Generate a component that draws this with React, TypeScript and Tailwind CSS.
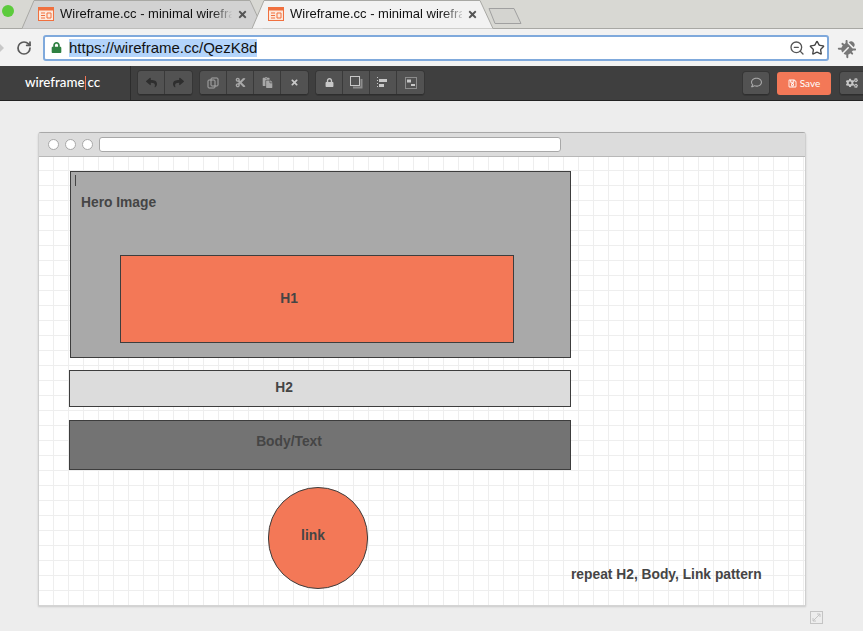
import type { ReactNode } from "react";
import { RotateCw, Star, ZoomOut } from "lucide-react";
import { FaBug, FaCogs, FaCut, FaLock, FaPaste, FaRegComment, FaRegSave, FaReply, FaShare, FaTimes } from "react-icons/fa";

function TabIcon() {
  return (
    <svg width="16" height="14" viewBox="0 0 16 14" className="shrink-0">
      <rect x="0.5" y="0.5" width="15" height="13" fill="#fde8dc" stroke="#f0703f" />
      <rect x="0.5" y="0.5" width="15" height="3" fill="#f0703f" />
      <path d="M3 6h4M3 8.5h4M3 11h4M9 6h4v5h-4z" stroke="#f0703f" fill="none" />
    </svg>
  );
}

function Tab({ active }: { active?: boolean }) {
  return (
    <div className={`relative flex h-[28px] w-[242px] shrink-0 items-center pl-[16px] ${active ? "z-10" : "-mr-[12px]"}`}>
      <svg width="242" height="29" viewBox="0 0 242 29" className="absolute left-0 top-0">
        <path
          d="M0 28.5 L12 0.5 H228 L241 28.5"
          fill={active ? "#f2f2f2" : "#d2d2d2"}
          stroke="#a8a8a4"
        />
      </svg>
      <div className="relative flex items-center gap-[6px]">
        <TabIcon />
        <span className="w-[172px] overflow-hidden whitespace-nowrap bg-gradient-to-r from-[#111] from-[88%] to-[#ccc] bg-clip-text pb-[1px] text-[13px] text-transparent">
          Wireframe.cc - minimal wirefra
        </span>
        <FaTimes size={11} className="-ml-[1px] text-[#555]" />
      </div>
    </div>
  );
}

function ToolBtn({ children }: { children: ReactNode }) {
  return (
    <div className="flex h-[23px] w-[27px] items-center justify-center border-r border-[#3a3a3a] bg-[#525252] text-[#2e2e2e] last:border-r-0">
      {children}
    </div>
  );
}

function Group({ children }: { children: ReactNode }) {
  return (
    <div className="flex overflow-hidden rounded-[3px] border-b border-[#2e2e2e] shadow-[0_0_0_1px_#363636]">
      {children}
    </div>
  );
}

function Layers() {
  return (
    <svg width="13" height="13" viewBox="0 0 13 13" fill="none" stroke="#c8c8c8">
      <rect x="0.5" y="0.5" width="9" height="9" />
      <path d="M11.5 3v8.5H3" strokeWidth="2" stroke="#8d8d8d" />
    </svg>
  );
}

function Align() {
  return (
    <svg width="12" height="12" viewBox="0 0 12 12" fill="#c8c8c8">
      <rect x="0" y="0" width="1" height="1" />
      <rect x="0" y="3" width="1" height="1" />
      <rect x="0" y="6" width="1" height="1" />
      <rect x="0" y="9" width="1" height="1" />
      <rect x="2" y="2" width="8" height="3" />
      <rect x="2" y="7" width="5" height="3" />
    </svg>
  );
}

function GroupIcon() {
  return (
    <svg width="12" height="12" viewBox="0 0 12 12" fill="none">
      <rect x="0.5" y="0.5" width="11" height="11" stroke="#c8c8c8" strokeDasharray="1 1" />
      <rect x="2" y="2.5" width="4" height="3" fill="#c8c8c8" />
      <rect x="6" y="7" width="4" height="2" fill="#c8c8c8" />
    </svg>
  );
}

function Clone() {
  return (
    <svg width="12" height="12" viewBox="0 0 12 12" fill="none" stroke="#a8a8a8">
      <rect x="1" y="3" width="7" height="8" rx="1" />
      <rect x="4" y="1" width="7" height="8" rx="1" />
    </svg>
  );
}

export default function App() {
  return (
    <div className="flex h-[631px] w-[863px] flex-col overflow-hidden bg-[#ededed] font-['Liberation_Sans',sans-serif]">
      {/* tab strip */}
      <div className="relative flex h-[29px] shrink-0 border-b border-[#a8a8a4] bg-[#d8d8d3] pl-[22px]">
        <div className="absolute left-[2px] top-[5px] h-[12px] w-[12px] rounded-full bg-[#5ccb3c]" />
        <Tab />
        <Tab active />
        <svg width="35" height="18" viewBox="0 0 35 18" className="ml-[-6px] mt-[7px]">
          <path d="M1 1.5 H26 L33 16.5 H7 Z" fill="#d4d4d0" stroke="#a0a0a0" strokeLinejoin="round" />
        </svg>
      </div>

      {/* address bar */}
      <div className="relative flex h-[37px] shrink-0 items-center bg-[#f2f2f2] pl-[16px] pr-[6px]">
        <div className="absolute left-0 top-[15px] h-0 w-0 border-y-[4px] border-l-[4px] border-y-transparent border-l-[#c8c8c8]" />
        <RotateCw size={16} strokeWidth={2.6} className="text-[#5a5a5a]" />
        <div className="ml-[11px] flex h-[26px] w-[786px] items-center rounded-[3px] border-2 border-[#7fa9dc] bg-white pl-[6px] pr-[2px]">
          <FaLock size={11} className="text-[#2f8142]" />
          <span className="ml-[7px] bg-[#b3d4fb] text-[15px] leading-[18px] text-[#111]">https://wireframe.cc/QezK8d</span>
          <ZoomOut size={16} className="ml-auto text-[#555]" />
          <Star size={16} strokeWidth={2} className="ml-[4px] text-[#444]" />
        </div>
        <FaBug size={16} className="ml-[11px] rotate-45 text-[#777]" />
      </div>

      {/* wireframe.cc toolbar */}
      <div className="flex h-[35px] shrink-0 items-center border-b border-[#222] bg-[#3f3f3f]">
        <div className="flex h-full w-[131px] items-center border-r border-[#2c2c2c] pl-[25px] font-['Lato',sans-serif] text-[13.3px] font-medium text-white">
          wireframe<span className="mx-[1px] h-[14px] w-px bg-[#f47656]" />cc
        </div>
        <div className="ml-[7px] flex gap-[8px]">
          <Group>
            <ToolBtn><FaReply size={11} /></ToolBtn>
            <ToolBtn><FaShare size={11} /></ToolBtn>
          </Group>
          <Group>
            <ToolBtn><Clone /></ToolBtn>
            <ToolBtn><FaCut size={11} className="text-[#a8a8a8]" /></ToolBtn>
            <ToolBtn><FaPaste size={11} className="text-[#a8a8a8]" /></ToolBtn>
            <ToolBtn><FaTimes size={9} className="text-[#c8c8c8]" /></ToolBtn>
          </Group>
          <Group>
            <ToolBtn><FaLock size={9} className="text-[#c8c8c8]" /></ToolBtn>
            <ToolBtn><Layers /></ToolBtn>
            <ToolBtn><Align /></ToolBtn>
            <ToolBtn><GroupIcon /></ToolBtn>
          </Group>
        </div>
        <div className="ml-auto flex h-[23px] w-[26px] items-center justify-center rounded-[3px] border-b border-[#2e2e2e] bg-[#525252] text-[#a8a8a8] shadow-[0_0_0_1px_#363636]">
          <FaRegComment size={11} />
        </div>
        <div className="ml-[8px] flex h-[23px] w-[54px] items-center justify-center gap-[3px] rounded-[3px] bg-[#f37857] font-['Lato',sans-serif] text-[10px] text-white">
          <FaRegSave size={9} />
          Save
        </div>
        <div className="-mr-[4px] ml-[9px] flex h-[23px] w-[27px] items-center justify-center rounded-[3px] border-b border-[#2e2e2e] bg-[#525252] pr-[4px] text-[#c8c8c8] shadow-[0_0_0_1px_#363636]">
          <FaCogs size={12} />
        </div>
      </div>

      {/* browser frame on the canvas */}
      <div className="relative flex-1 pl-[38px] pt-[31px]">
        <div className="flex h-[474px] w-[768px] flex-col overflow-hidden rounded-t-[3px] border border-[#a8a8a8] border-b-[#d4d4d4] border-r-[#cfcfcf] border-l-[#cfcfcf] shadow-[0_1px_2px_rgba(0,0,0,0.15)]">
          <div className="flex h-[24px] shrink-0 items-center gap-[6px] border-b border-[#b8b8b8] bg-[#dcdcdc] pl-[9px]">
            <div className="h-[11px] w-[11px] rounded-full border border-[#a8a8a8] bg-white" />
            <div className="h-[11px] w-[11px] rounded-full border border-[#a8a8a8] bg-white" />
            <div className="h-[11px] w-[11px] rounded-full border border-[#a8a8a8] bg-white" />
            <div className="h-[15px] w-[462px] rounded-[3px] border border-[#a8a8a8] bg-white" />
          </div>
          <div className="relative flex-1 bg-white bg-[linear-gradient(#eeeeee_1px,transparent_1px),linear-gradient(90deg,#eeeeee_1px,transparent_1px)] bg-[size:15px_15px] bg-[position:14px_13px] text-[13.8px] font-bold text-[#454545]">
            <div className="absolute left-[31px] top-[14px] h-[187px] w-[501px] border border-[#3d3d3d] bg-[#a9a9a9]">
              <div className="absolute left-[4px] top-[3px] h-[11px] w-px bg-[#444]" />
              <span className="absolute left-[10px] top-[21px]">Hero Image</span>
              <div className="absolute left-[49px] top-[83px] flex h-[88px] w-[394px] items-center justify-center border border-[#3d3d3d] bg-[#f37857] pr-[56px]">
                H1
              </div>
            </div>
            <div className="absolute left-[30px] top-[213px] flex h-[37px] w-[502px] items-center justify-center border border-[#3d3d3d] bg-[#dcdcdc] pr-[72px]">
              H2
            </div>
            <div className="absolute left-[30px] top-[263px] flex h-[50px] w-[502px] justify-center border border-[#3d3d3d] bg-[#737373] pr-[62px] pt-[11px]">
              Body/Text
            </div>
            <div className="absolute left-[229px] top-[330px] flex h-[102px] w-[100px] items-center justify-center rounded-full border border-[#3d3d3d] bg-[#f37857] pb-[4px] pr-[10px]">
              link
            </div>
            <span className="absolute left-[532px] top-[408px] whitespace-nowrap">repeat H2, Body, Link pattern</span>
          </div>
        </div>
        <div className="absolute left-[810px] top-[510px] flex h-[13px] w-[13px] items-center justify-center border border-[#c4c4c4]">
          <svg width="9" height="9" viewBox="0 0 9 9" fill="none" stroke="#c4c4c4">
            <path d="M1 8 L8 1 M5 1 H8 V4 M1 5 V8 H4" />
          </svg>
        </div>
      </div>
    </div>
  );
}
